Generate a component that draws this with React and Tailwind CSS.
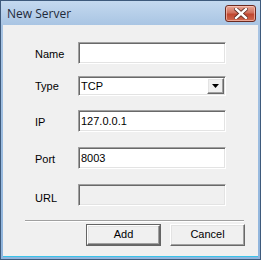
import React from 'react';

const sunken =
  'border border-t-[#a0a0a0] border-l-[#a0a0a0] border-r-white border-b-white shadow-[inset_1px_1px_0_#696969,inset_-1px_-1px_0_#e3e3e3]';
const raised =
  'border border-t-white border-l-white border-r-[#696969] border-b-[#696969] shadow-[inset_-1px_-1px_0_#a0a0a0,inset_1px_1px_0_#e3e3e3]';

const Field = ({ label, value, disabled, labelShift = 'mt-[3px]', className = '' }) => (
  <div className={`flex items-center ${className}`}>
    <span className={`w-[43px] ${labelShift}`}>{label}</span>
    <div
      className={`${sunken} w-[148px] h-[22px] flex items-center pl-[2px] ${
        disabled ? 'bg-[#f0f0f0]' : 'bg-white'
      }`}
    >
      {value}
    </div>
  </div>
);

const CloseButton = () => (
  <button className="w-[31px] h-[17px] rounded-[3px] border border-[#6b2a20] bg-[linear-gradient(#e9a796,#d0705c_45%,#c0462f_55%,#d06a50)] flex items-center justify-center shadow-[inset_0_0_0_1px_rgba(255,210,200,0.6)]">
    <svg width="14" height="11" viewBox="0 0 14 11">
      <path
        d="M2 1 L12 10 M12 1 L2 10"
        stroke="#5a2a22"
        strokeWidth="4"
        strokeLinecap="square"
      />
      <path
        d="M2 1 L12 10 M12 1 L2 10"
        stroke="#ffffff"
        strokeWidth="2.4"
        strokeLinecap="square"
      />
    </svg>
  </button>
);

export default function App() {
  return (
    <div className="w-[261px] h-[260px] flex flex-col border border-[#3e5a7c] bg-[linear-gradient(#c4d9ef,#a8c4e3_25px,#8fb4dc)] font-['Liberation_Sans',Arial,sans-serif] text-[11px] text-black">
      {/* Title bar */}
      <div className="h-[24px] flex items-center justify-between pl-[6px] pr-[4px]">
        <span className="font-['Open_Sans',sans-serif] text-[12px] text-[#1e2a3a] mt-[1px]">
          New Server
        </span>
        <CloseButton />
      </div>

      {/* Client area */}
      <div className="flex-1 mx-[2px] mb-[2px] bg-[#f0f0f0] border-b border-b-[#38c3ea] flex flex-col pl-[32px] pt-[17px]">
        <Field label="Name" value="" />

        <div className="flex items-center mt-[12px]">
          <span className="w-[43px] mt-[1px]">Type</span>
          <div className={`${sunken} w-[148px] h-[20px] bg-white flex items-center justify-between pl-[2px] pr-[1px]`}>
            <span>TCP</span>
            <div className={`${raised} w-[17px] h-[16px] bg-[#f0f0f0] flex items-center justify-center`}>
              <svg width="7" height="4" viewBox="0 0 7 4">
                <path d="M0 0 H7 L3.5 4 Z" fill="#000" />
              </svg>
            </div>
          </div>
        </div>

        <Field label="IP" value="127.0.0.1" className="mt-[14px]" />
        <Field label="Port" value="8003" className="mt-[15px]" />
        <Field label="URL" value="" disabled className="mt-[15px]" labelShift="mt-[6px]" />

        {/* Separator */}
        <div className="mt-[13px] -ml-[10px] w-[219px] h-[2px] border-t border-t-[#a0a0a0] border-b border-b-white" />

        {/* Buttons */}
        <div className="flex gap-[9px] mt-[2px] ml-[51px]">
          <div className="border border-[#646464]">
            <button className={`${raised} w-[73px] h-[20px] bg-[#f0f0f0] flex items-center justify-center`}>
              Add
            </button>
          </div>
          <button className={`${raised} w-[75px] h-[22px] bg-[#f0f0f0] flex items-center justify-center`}>
            Cancel
          </button>
        </div>
      </div>
    </div>
  );
}
